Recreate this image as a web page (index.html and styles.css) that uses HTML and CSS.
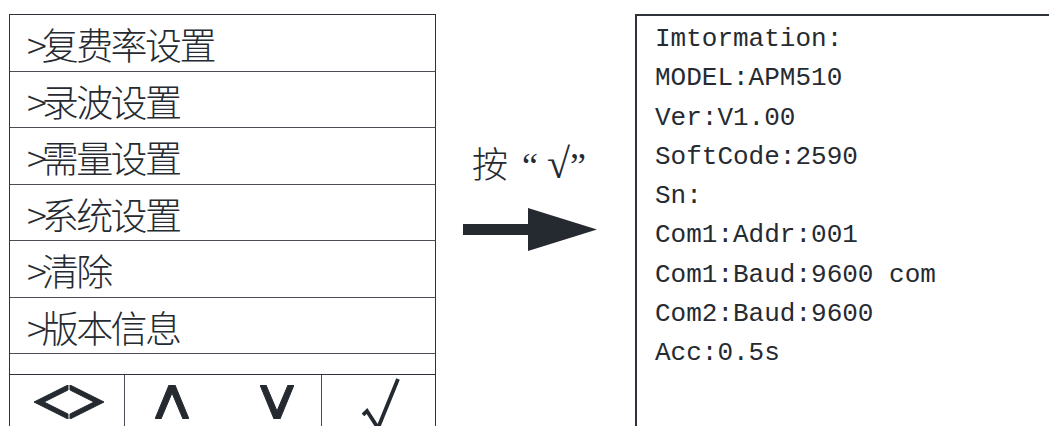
FILE: index.html
```html
<!DOCTYPE html>
<html lang="zh-CN">
<head>
  <meta charset="UTF-8" />
  <meta name="viewport" content="width=device-width, initial-scale=1.0" />
  <title>版本信息</title>
  <link rel="stylesheet" href="styles.css">
</head>
<body>
  <div class="screen">
    <div class="menu">
      <div class="menu-item"><span class="gt">&gt;</span>复费率设置</div>
      <div class="menu-item"><span class="gt">&gt;</span>录波设置</div>
      <div class="menu-item"><span class="gt">&gt;</span>需量设置</div>
      <div class="menu-item"><span class="gt">&gt;</span>系统设置</div>
      <div class="menu-item"><span class="gt">&gt;</span>清除</div>
      <div class="menu-item"><span class="gt">&gt;</span>版本信息</div>
      <div class="menu-gap"></div>
      <div class="keys">
        <div class="key key-lr">
          <svg width="70" height="34" viewBox="0 0 70 34">
            <polygon points="34,0 34,5 10,17 34,29 34,34 0,17" />
            <polygon points="36,0 70,17 36,34 36,29 60,17 36,5" />
          </svg>
        </div>
        <div class="key key-ud">
          <svg width="34" height="34" viewBox="0 0 34 34">
            <polygon points="14,0 20,0 34,34 28,34 17,8 6,34 0,34" />
          </svg>
          <svg width="34" height="34" viewBox="0 0 34 34">
            <polygon points="0,0 6,0 17,26 28,0 34,0 20,34 14,34" />
          </svg>
        </div>
        <div class="key key-ok">
          <svg width="38" height="52" viewBox="0 0 38 52">
            <polyline points="1,37 5,33 16,50 36,1" />
          </svg>
        </div>
      </div>
    </div>

    <div class="hint">
      <div class="hint-text">按<span class="mark">“ <span class="root">√</span>”</span></div>
      <svg class="arrow" width="136" height="44" viewBox="0 0 136 44">
        <rect x="0" y="16" width="66" height="11" />
        <polygon points="65,0 134,21.5 65,43" />
      </svg>
    </div>

    <div class="info">
      <div class="line">Imtormation:</div>
      <div class="line">MODEL:APM510</div>
      <div class="line">Ver:V1.00</div>
      <div class="line">SoftCode:2590</div>
      <div class="line">Sn:</div>
      <div class="line">Com1:Addr:001</div>
      <div class="line">Com1:Baud:9600 com</div>
      <div class="line">Com2:Baud:9600</div>
      <div class="line">Acc:0.5s</div>
    </div>
  </div>
</body>
</html>
```

FILE: styles.css
```css
html, body {
  margin: 0;
  height: 100%;
  overflow: hidden;
  background: #fff;
}
body {
  color: #262b32;
  font-family: "Noto Sans CJK SC", sans-serif;
}
.screen {
  display: flex;
  align-items: flex-start;
  padding: 14px 0 0 9px;
}

/* left menu */
.menu {
  width: 427px;
  box-sizing: border-box;
  border: 1px solid #2e3339;
  border-bottom: none;
}
.menu-item {
  height: 56.5px;
  box-sizing: border-box;
  border-bottom: 1px solid #4a4f55;
  padding: 1px 0 0 17px;
  font-size: 37px;
  line-height: 56px;
  font-weight: 300;
  letter-spacing: -2.6px;
  white-space: nowrap;
}
.gt {
  letter-spacing: -5px;
}
.menu-gap {
  height: 20px;
  border-bottom: 1px solid #2e3339;
}
.keys {
  display: flex;
  height: 60px;
}
.key {
  display: flex;
  justify-content: center;
  padding-top: 10px;
  box-sizing: border-box;
}
.key svg {
  fill: #252a31;
  stroke: #252a31;
}
.key-lr {
  width: 115px;
  border-right: 1px solid #4a4f55;
  padding-left: 4px;
}
.key-ud {
  width: 197px;
  border-right: 1px solid #4a4f55;
  gap: 71px;
  padding-left: 2px;
}
.key-ok {
  width: 113px;
  padding-top: 3px;
  padding-left: 4px;
}
.key-ok svg polyline {
  fill: none;
  stroke-width: 3.8;
  stroke-linejoin: miter;
}

/* middle hint */
.hint {
  width: 199px;
  display: flex;
  flex-direction: column;
  padding: 128px 0 0 27px;
  box-sizing: border-box;
}
.hint-text {
  margin-left: 9px;
  font-size: 36px;
  line-height: 40px;
  font-weight: 300;
  white-space: pre;
}
.mark {
  font-family: "Liberation Serif", serif;
  margin-left: 14px;
}
.root {
  font-size: 42px;
  line-height: 0;
}
.arrow {
  margin-top: 22px;
  fill: #252a31;
}

/* right info */
.info {
  flex: 1;
  height: 440px;
  border-top: 2px solid #2e3339;
  border-left: 2px solid #2e3339;
  padding: 4px 0 0 18px;
  font-family: "Liberation Mono", monospace;
  font-size: 26px;
  line-height: 39.3px;
}
.line {
  white-space: pre;
}
```
